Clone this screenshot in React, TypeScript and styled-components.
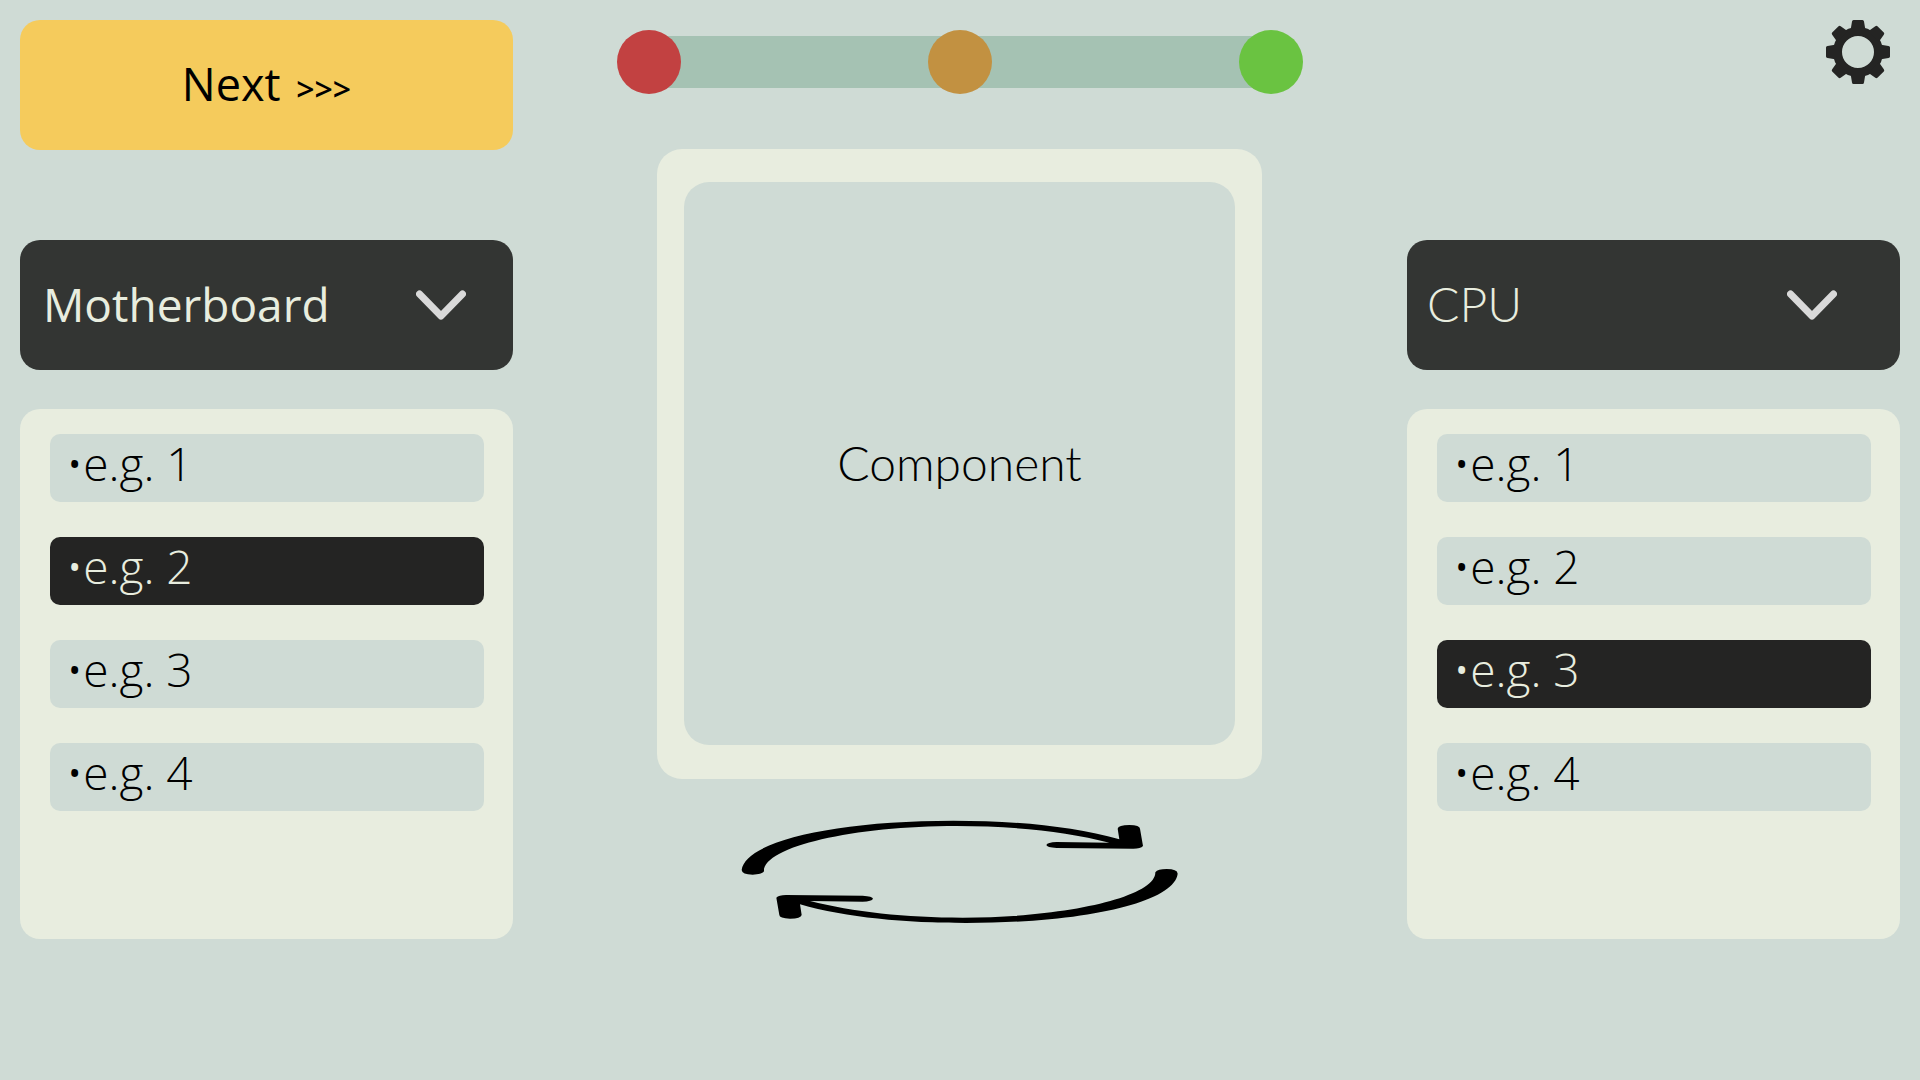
import React, { useState } from "react";
import styled, { createGlobalStyle } from "styled-components";

const color = {
  mist: "#cfdbd5",
  cream: "#e8eddf",
  slate: "#333533",
  ink: "#242423",
  gold: "#f5cb5c",
  sage: "#a5c2b3",
  chevron: "#d9d9d9",
};

const GlobalStyle = createGlobalStyle`
  *, *::before, *::after { box-sizing: border-box; }
  body {
    margin: 0;
    background: ${color.mist};
    color: #000;
    font-family: "Open Sans", "Noto Sans", sans-serif;
  }
`;

const Page = styled.main`
  display: grid;
  grid-template-columns: 493fr 686fr 493fr;
  gap: 104px;
  min-height: 100vh;
  padding: 20px;
`;

const Side = styled.section`
  display: flex;
  flex-direction: column;
  min-width: 0;
`;

const TopSlot = styled.div`
  display: flex;
  justify-content: flex-end;
  align-items: flex-start;
  height: 130px;
  margin-bottom: 90px;
`;

const NextButton = styled.button`
  width: 100%;
  height: 130px;
  padding: 2px 0 0;
  border: 0;
  border-radius: 20px;
  background: ${color.gold};
  color: #000;
  font: 400 45px/60px "Open Sans", sans-serif;
  cursor: pointer;
`;

const Arrows = styled.span`
  margin-left: 4px;
  font-size: 32px;
  font-weight: 600;
`;

const IconButton = styled.button`
  width: 64px;
  height: 64px;
  margin-right: 10px;
  padding: 0;
  border: 0;
  background: none;
  color: ${color.ink};
  cursor: pointer;

  svg {
    display: block;
  }
`;

const Picker = styled.div<{ $inset: number }>`
  display: grid;
  align-items: center;
  height: 130px;
  margin-bottom: 39px;

  > * {
    grid-area: 1 / 1;
  }

  svg {
    justify-self: end;
    margin-right: ${(p) => p.$inset}px;
    pointer-events: none;
  }
`;

type FaceProps = { $face: "regular" | "thin" };

const Select = styled.select<FaceProps>`
  appearance: none;
  width: 100%;
  height: 100%;
  padding: 0 20px 3px ${(p) => (p.$face === "thin" ? 20 : 23)}px;
  border: 0;
  border-radius: 20px;
  background: ${color.slate};
  color: ${color.cream};
  font: ${(p) => (p.$face === "thin" ? '300 48px/60px Lato' : '400 46px/60px "Open Sans"')}, sans-serif;
  cursor: pointer;
`;

const Options = styled.ul`
  display: flex;
  flex-direction: column;
  gap: 35px;
  min-height: 530px;
  margin: 0;
  padding: 25px 29px 25px 30px;
  border-radius: 20px;
  background: ${color.cream};
  list-style: none;
`;

const Option = styled.button<{ $selected: boolean }>`
  display: block;
  width: 100%;
  height: 68px;
  padding: 0 16px 10px;
  border: 0;
  border-radius: 10px;
  background: ${(p) => (p.$selected ? color.ink : color.mist)};
  color: ${(p) => (p.$selected ? color.cream : "#000")};
  font: 300 46px/58px "Open Sans", sans-serif;
  text-align: left;
  cursor: pointer;
`;

const Center = styled.section`
  display: flex;
  flex-direction: column;
  align-items: stretch;
  min-width: 0;
  padding-top: 10px;
`;

const Track = styled.div`
  display: flex;
  align-items: center;
  justify-content: space-between;
  height: 64px;
  margin-bottom: 55px;
  background: linear-gradient(${color.sage}, ${color.sage}) center / calc(100% - 64px) 52px no-repeat;
`;

const Stop = styled.span<{ $fill: string }>`
  width: 64px;
  height: 64px;
  border-radius: 50%;
  background: ${(p) => p.$fill};
`;

const Card = styled.div`
  display: flex;
  margin: 0 41px 39px 40px;
  padding: 33px 27px 34px;
  border-radius: 25px;
  background: ${color.cream};
`;

const Preview = styled.div`
  display: flex;
  flex: 1;
  align-items: center;
  justify-content: center;
  min-height: 563px;
  padding-bottom: 2px;
  border-radius: 25px;
  background: ${color.mist};
  font: 300 48px/60px Lato, sans-serif;
`;

const SwapButton = styled.button`
  align-self: center;
  padding: 0;
  border: 0;
  background: none;
  color: #000;
  cursor: pointer;

  svg {
    display: block;
  }
`;

const ARROW =
  "M65 240C75 155 340 92 700 92C880 92 1060 108 1198 148L1193 116Q1195 105 1228 105Q1260 106 1260 116L1269 168Q1262 176 1240 176L1010 174Q980 172 979 165Q982 157 1010 156L1168 158C1040 125 880 108 710 108C400 108 130 170 132 244Q125 254 98 254Q66 254 65 240Z";

function SwapIcon() {
  return (
    <svg width="440" height="106" viewBox="60 84 1320 318" fill="currentColor" aria-hidden="true">
      <path d={ARROW} />
      <path d={ARROW} transform="rotate(180 719 245.5)" />
    </svg>
  );
}

function GearIcon() {
  return (
    <svg width="64" height="64" viewBox="-32 -32 64 64" fill="currentColor" aria-hidden="true">
      <circle r="20.5" fill="none" stroke="currentColor" strokeWidth="9" />
      {[0, 45, 90, 135, 180, 225, 270, 315].map((a) => (
        <path
          key={a}
          transform={`rotate(${a})`}
          d="M-7.5 -22L-7 -24.5L-6 -30.5Q-5.8 -32 -4.5 -32H4.5Q5.8 -32 6 -30.5L7 -24.5L7.5 -22Z"
        />
      ))}
    </svg>
  );
}

function ChevronIcon() {
  return (
    <svg width="50" height="30" viewBox="0 0 50 30" fill="none" aria-hidden="true">
      <path
        d="M3.5 4L25 26L46.5 4"
        stroke={color.chevron}
        strokeWidth="7"
        strokeLinecap="round"
        strokeLinejoin="round"
      />
    </svg>
  );
}

const EXAMPLES = ["e.g. 1", "e.g. 2", "e.g. 3", "e.g. 4"];
const PARTS = ["Motherboard", "CPU"];

type PartListProps = {
  part: string;
  initial: number;
  inset: number;
  face: "regular" | "thin";
};

function PartList({ part, initial, inset, face }: PartListProps) {
  const [selected, setSelected] = useState(initial);
  return (
    <>
      <Picker $inset={inset}>
        <Select $face={face} defaultValue={part} aria-label="Component type">
          {PARTS.map((p) => (
            <option key={p}>{p}</option>
          ))}
        </Select>
        <ChevronIcon />
      </Picker>
      <Options>
        {EXAMPLES.map((label, i) => (
          <li key={label}>
            <Option $selected={i === selected} aria-pressed={i === selected} onClick={() => setSelected(i)}>
              •{label}
            </Option>
          </li>
        ))}
      </Options>
    </>
  );
}

export default function App() {
  return (
    <>
      <GlobalStyle />
      <Page>
        <Side>
          <TopSlot>
            <NextButton>
              Next <Arrows>&gt;&gt;&gt;</Arrows>
            </NextButton>
          </TopSlot>
          <PartList part="Motherboard" initial={1} inset={47} face="regular" />
        </Side>
        <Center>
          <Track>
            <Stop $fill="#c24141" />
            <Stop $fill="#c29141" />
            <Stop $fill="#6ac341" />
          </Track>
          <Card>
            <Preview>Component</Preview>
          </Card>
          <SwapButton aria-label="Swap">
            <SwapIcon />
          </SwapButton>
        </Center>
        <Side>
          <TopSlot>
            <IconButton aria-label="Settings">
              <GearIcon />
            </IconButton>
          </TopSlot>
          <PartList part="CPU" initial={2} inset={63} face="thin" />
        </Side>
      </Page>
    </>
  );
}
